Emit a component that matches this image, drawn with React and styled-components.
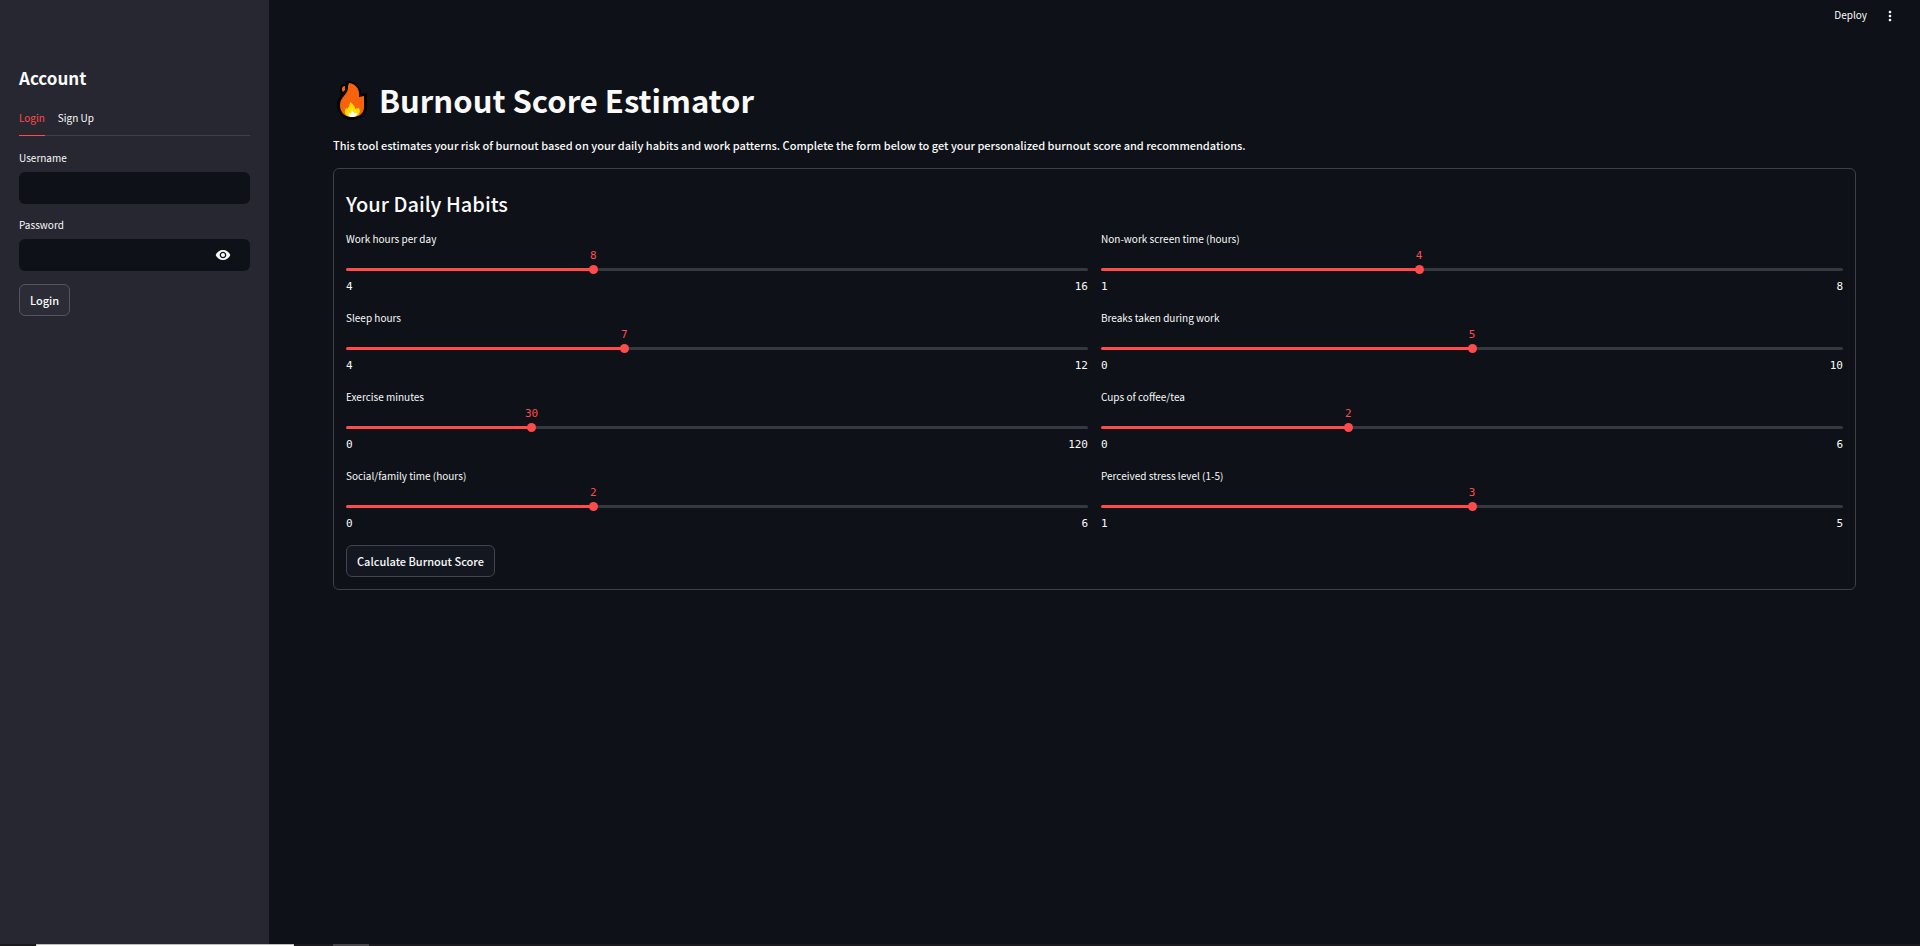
import React, { useState } from "react";
import styled, { createGlobalStyle } from "styled-components";
import { MdVisibility, MdVisibilityOff, MdMoreVert } from "react-icons/md";

const color = {
  page: "#0e1117",
  panel: "#262730",
  text: "#fafafa",
  red: "#ff4b4b",
  track: "#363840",
  line: "#3e4045",
};

const sans = '"Noto Sans CJK SC", "Noto Sans", sans-serif';
const mono = '"DejaVu Sans Mono", "Liberation Mono", monospace';

const GlobalStyle = createGlobalStyle`
  *, *::before, *::after { box-sizing: border-box; }
  body {
    margin: 0;
    background: ${color.page};
    color: ${color.text};
    font-family: ${sans};
    font-size: 11px;
    font-weight: 500;
    line-height: 20px;
  }
  button, input { font: inherit; color: inherit; }
`;

const Screen = styled.div`
  display: grid;
  grid-template-rows: 1fr 2px;
  min-height: 100vh;
`;

const Page = styled.div`
  display: grid;
  grid-template-columns: 269px minmax(0, 1fr);
`;

const Sidebar = styled.aside`
  display: flex;
  flex-direction: column;
  padding: 66px 19px 0;
  background: ${color.panel};
`;

const SidebarTitle = styled.h2`
  margin: 0;
  font-size: 17px;
  font-weight: 700;
  line-height: 24px;
`;

const TabList = styled.div`
  display: flex;
  gap: 13px;
  margin: 12px 0 14px;
  border-bottom: 1px solid ${color.line};
`;

const Tab = styled.button`
  height: 34px;
  margin-bottom: -1px;
  padding: 0 0 2px;
  border: 0;
  border-bottom: 1px solid ${(p) => (p.$active ? color.red : "transparent")};
  background: none;
  color: ${(p) => (p.$active ? color.red : color.text)};
  font-size: 10px;
  font-weight: 400;
  cursor: pointer;
`;

const LoginForm = styled.form`
  display: flex;
  flex-direction: column;
  align-items: flex-start;
  gap: 13px;
`;

const Field = styled.div`
  width: 100%;
`;

const Label = styled.label`
  display: block;
  height: ${(p) => (p.$overSlider ? 18 : 22)}px;
  font-size: 10px;
  font-weight: 400;
  line-height: ${(p) => (p.$overSlider ? 18 : 16)}px;
`;

const InputBox = styled.div`
  display: flex;
  height: 32px;
  border-radius: 6px;
  background: ${color.page};
`;

const TextInput = styled.input`
  flex: 1;
  min-width: 0;
  padding: 0 10px;
  border: 0;
  outline: 0;
  background: none;
`;

const IconButton = styled.button`
  display: flex;
  align-items: center;
  justify-content: center;
  padding: 0;
  border: 0;
  background: none;
  cursor: pointer;
`;

const EyeButton = styled(IconButton)`
  width: 16px;
  margin-right: 19px;
`;

const Button = styled.button`
  height: 32px;
  padding: 0 10px;
  border: 1px solid ${(p) => (p.$onPanel ? "#55565d" : "#41444c")};
  border-radius: 6px;
  background: ${(p) => (p.$onPanel ? "#2b2c36" : "#131720")};
  line-height: 20px;
  cursor: pointer;
`;

const Content = styled.div`
  display: flex;
  flex-direction: column;
`;

const Toolbar = styled.header`
  display: flex;
  justify-content: flex-end;
  align-items: center;
  gap: 15px;
  height: 32px;
  padding-right: 22px;
`;

const DeployButton = styled.button`
  padding: 0 0 2px;
  border: 0;
  background: none;
  font-size: 10px;
  font-weight: 400;
  cursor: pointer;
`;

const Main = styled.main`
  padding: 44px 64px 64px;
`;

const Title = styled.h1`
  display: flex;
  align-items: center;
  gap: 12px;
  margin: 0;
  padding-left: 4px;
  font-size: 31px;
  font-weight: 700;
  line-height: 48px;
`;

const Intro = styled.p`
  margin: 11px 0 13px;
`;

const HabitsForm = styled.form`
  padding: 12px;
  border: 1px solid ${color.line};
  border-radius: 6px;
`;

const FormTitle = styled.h2`
  margin: 0 0 12px;
  padding-top: 9px;
  font-size: 20px;
  font-weight: 500;
  line-height: 28px;
`;

const SliderGrid = styled.div`
  display: grid;
  grid-template-columns: repeat(2, minmax(0, 1fr));
  gap: 13px;
  margin-bottom: 12px;
`;

const ValueRow = styled.div`
  position: relative;
  height: 13px;
`;

const Value = styled.output`
  position: absolute;
  transform: translateX(-50%);
  color: ${color.red};
  font-family: ${mono};
  font-size: 11px;
  font-weight: 400;
  line-height: 16px;
`;

const Range = styled.input`
  display: block;
  appearance: none;
  width: calc(100% + 8px);
  height: 17px;
  margin: 0 -4px;
  background: none;
  cursor: pointer;

  &::-webkit-slider-thumb {
    appearance: none;
    width: 9px;
    height: 9px;
    border-radius: 50%;
    background: ${color.red};
  }
`;

const Rail = styled.div`
  display: grid;
  align-items: center;

  &::before {
    content: "";
    grid-area: 1 / 1;
    height: 3px;
    border-radius: 2px;
    background: linear-gradient(
      to right,
      ${color.red} var(--fill),
      ${color.track} var(--fill)
    );
  }

  > ${Range} {
    grid-area: 1 / 1;
  }
`;

const Limits = styled.div`
  display: flex;
  justify-content: space-between;
  height: 18px;
  font-family: ${mono};
  font-size: 11px;
  font-weight: 400;
  line-height: 18px;
`;

const TaskEdge = styled.div`
  display: grid;
  grid-template-columns: 36px 258px 39px 36px 1fr;
  background: #1b1a1c;
`;

const EdgeWindow = styled.div`
  grid-column: 2;
  border: 1px solid #bdbdbd;
  border-bottom-color: #ffffff;
`;

const EdgeTab = styled.div`
  grid-column: 4;
  background: #48464a;
`;

const Flame = () => (
  <svg width="30" height="40" viewBox="0 0 30 40" role="img" aria-label="Fire">
    <path
      d="M9 1C18 0 24 6 24 14L30 13V28C29 35 23 40 15 40S0 34 0 25C0 20 3 17 4 14C2 10 3 5 7 4L9 4Z"
      fill="#000"
    />
    <path
      d="M12 3C19 4 23 9 22 17L27 16V27C27 33 23 37 15 37S3 32 3 25C3 17 12 14 11 6Z"
      fill="#f7630c"
    />
    <path d="M8 6V10L6 12C4 9 5 6 8 6Z" fill="#f7630c" />
    <path
      d="M13 22C16 24 18 26 18 29L22 28C25 33 20 37 15 37C9 37 6 33 9 28L10 29C12 27 13 25 13 22Z"
      fill="#ffde00"
    />
    <path d="M15 30L17 33L20 33C20 36 18 37 15 37C12 37 11 35 12 33L14 34Z" fill="#fff" />
  </svg>
);

const habits = [
  { id: "work", label: "Work hours per day", min: 4, max: 16, value: 8 },
  { id: "screen", label: "Non-work screen time (hours)", min: 1, max: 8, value: 4 },
  { id: "sleep", label: "Sleep hours", min: 4, max: 12, value: 7 },
  { id: "breaks", label: "Breaks taken during work", min: 0, max: 10, value: 5 },
  { id: "exercise", label: "Exercise minutes", min: 0, max: 120, value: 30 },
  { id: "coffee", label: "Cups of coffee/tea", min: 0, max: 6, value: 2 },
  { id: "social", label: "Social/family time (hours)", min: 0, max: 6, value: 2 },
  { id: "stress", label: "Perceived stress level (1-5)", min: 1, max: 5, value: 3 },
];

function HabitSlider({ id, label, min, max, value: initial }) {
  const [value, setValue] = useState(initial);
  const fill = `${((value - min) / (max - min)) * 100}%`;
  return (
    <div>
      <Label $overSlider htmlFor={id}>
        {label}
      </Label>
      <ValueRow>
        <Value htmlFor={id} style={{ left: fill }}>
          {value}
        </Value>
      </ValueRow>
      <Rail style={{ "--fill": fill }}>
        <Range
          id={id}
          type="range"
          min={min}
          max={max}
          value={value}
          onChange={(e) => setValue(Number(e.target.value))}
        />
      </Rail>
      <Limits>
        <span>{min}</span>
        <span>{max}</span>
      </Limits>
    </div>
  );
}

function AccountPanel() {
  const [tab, setTab] = useState("Login");
  const [shown, setShown] = useState(false);
  return (
    <Sidebar>
      <SidebarTitle>Account</SidebarTitle>
      <TabList role="tablist">
        {["Login", "Sign Up"].map((name) => (
          <Tab
            key={name}
            type="button"
            role="tab"
            aria-selected={tab === name}
            $active={tab === name}
            onClick={() => setTab(name)}
          >
            {name}
          </Tab>
        ))}
      </TabList>
      <LoginForm onSubmit={(e) => e.preventDefault()}>
        <Field>
          <Label htmlFor="username">Username</Label>
          <InputBox>
            <TextInput id="username" type="text" autoComplete="username" />
          </InputBox>
        </Field>
        <Field>
          <Label htmlFor="password">Password</Label>
          <InputBox>
            <TextInput
              id="password"
              type={shown ? "text" : "password"}
              autoComplete="current-password"
            />
            <EyeButton
              type="button"
              aria-label={shown ? "Hide password" : "Show password"}
              onClick={() => setShown(!shown)}
            >
              {shown ? <MdVisibilityOff size={16} /> : <MdVisibility size={16} />}
            </EyeButton>
          </InputBox>
        </Field>
        <Button $onPanel>{tab}</Button>
      </LoginForm>
    </Sidebar>
  );
}

export default function App() {
  return (
    <Screen>
      <GlobalStyle />
      <Page>
        <AccountPanel />
        <Content>
          <Toolbar>
            <DeployButton type="button">Deploy</DeployButton>
            <IconButton type="button" aria-label="Main menu">
              <MdMoreVert size={16} />
            </IconButton>
          </Toolbar>
          <Main>
            <Title>
              <Flame />
              Burnout Score Estimator
            </Title>
            <Intro>
              This tool estimates your risk of burnout based on your daily habits and work
              patterns. Complete the form below to get your personalized burnout score and
              recommendations.
            </Intro>
            <HabitsForm onSubmit={(e) => e.preventDefault()}>
              <FormTitle>Your Daily Habits</FormTitle>
              <SliderGrid>
                {habits.map((habit) => (
                  <HabitSlider key={habit.id} {...habit} />
                ))}
              </SliderGrid>
              <Button>Calculate Burnout Score</Button>
            </HabitsForm>
          </Main>
        </Content>
      </Page>
      <TaskEdge>
        <EdgeWindow />
        <EdgeTab />
      </TaskEdge>
    </Screen>
  );
}
